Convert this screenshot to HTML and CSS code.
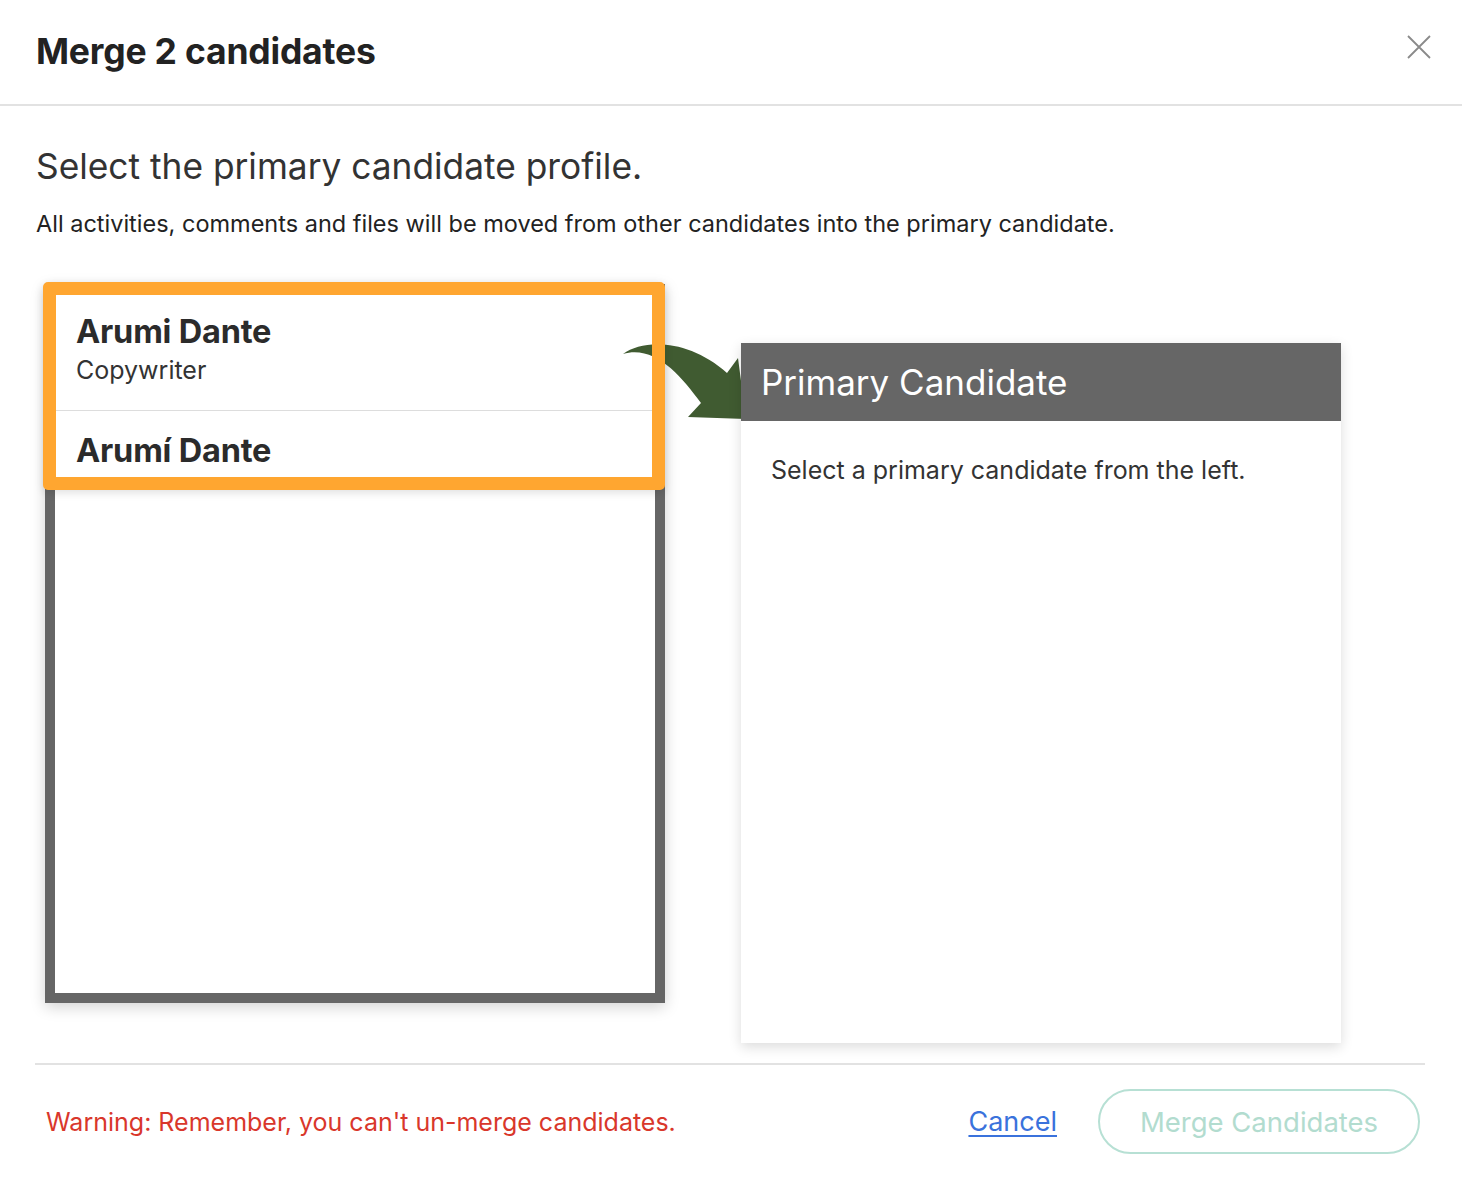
FILE: index.html
```html
<!DOCTYPE html>
<html lang="en">
<head>
<meta charset="utf-8">
<title>Merge 2 candidates</title>
<link rel="stylesheet" href="styles.css">
</head>
<body>
<div class="modal">
  <header class="modal-header">
    <h1 class="modal-title">Merge 2 candidates</h1>
    <button class="close-btn" aria-label="Close">
      <svg width="24" height="24" viewBox="0 0 24 24"><path d="M1 1 L23 23 M23 1 L1 23" stroke="#8a8a8a" stroke-width="1.8" fill="none"/></svg>
    </button>
  </header>
  <main class="modal-body">
    <h2 class="subtitle">Select the primary candidate profile.</h2>
    <p class="description">All activities, comments and files will be moved from other candidates into the primary candidate.</p>
    <div class="panels">
      <svg class="arrow" width="135" height="90" viewBox="0 0 135 90">
        <path d="M 8 19 C 30 3, 75 5, 112 38 L 123 23 L 131 84 L 73 82 L 86 68 C 65 40, 40 10, 8 19 Z" fill="#405b31"/>
      </svg>
      <div class="candidate-list">
        <div class="candidate">
          <div class="candidate-name">Arumi Dante</div>
          <div class="candidate-role">Copywriter</div>
        </div>
        <div class="candidate candidate-last">
          <div class="candidate-name">Arumí Dante</div>
        </div>
        <div class="highlight"></div>
      </div>
      <div class="primary-panel">
        <div class="primary-header">Primary Candidate</div>
        <div class="primary-body">Select a primary candidate from the left.</div>
      </div>
    </div>
  </main>
  <footer class="modal-footer">
    <span class="warning">Warning: Remember, you can't un-merge candidates.</span>
    <div class="actions">
      <a href="#" class="cancel">Cancel</a>
      <button class="merge-btn" disabled>Merge Candidates</button>
    </div>
  </footer>
</div>
</body>
</html>
```
FILE: styles.css
```css
* { box-sizing: border-box; }
html, body { margin: 0; padding: 0; background: #fff; }
body {
  font-family: Inter, Roboto, "Liberation Sans", Arial, sans-serif;
  color: #222;
  width: 1462px;
  height: 1192px;
  overflow: hidden;
}
.modal-header {
  height: 106px;
  border-bottom: 2px solid #e2e2e2;
  display: flex;
  align-items: flex-start;
  justify-content: space-between;
  padding: 0 31px 0 36px;
}
.modal-title {
  margin: 31px 0 0;
  font-size: 35.5px;
  line-height: 42px;
  font-weight: 700;
  color: #222;
  letter-spacing: -0.2px;
}
.close-btn {
  margin-top: 35px;
  padding: 0;
  border: 0;
  background: none;
  width: 24px;
  height: 24px;
  cursor: pointer;
}
.close-btn svg { display: block; }
.modal-body {
  padding: 0 36px;
}
.subtitle {
  margin: 0;
  padding-top: 41px;
  font-size: 35.3px;
  line-height: 40px;
  font-weight: 400;
  color: #333;
}
.description {
  margin: 23px 0 0;
  font-size: 23.5px;
  line-height: 28px;
  color: #222;
}
.panels {
  position: relative;
  display: flex;
  align-items: flex-start;
  margin: 46px 0 0 9px;
}
.arrow {
  position: absolute;
  left: 570px;
  top: 51px;
  z-index: 2;
}
.candidate-list {
  position: relative;
  width: 620px;
  height: 719px;
  border: 10px solid #666;
  background: #fff;
  box-shadow: 0 4px 14px rgba(0,0,0,0.18);
}
.candidate {
  padding: 19px 20px 25px 21px;
  border-bottom: 1px solid #ddd;
}
.candidate-last {
  border-bottom: 0;
  padding-top: 21px;
}
.candidate-name {
  font-size: 32.5px;
  line-height: 38px;
  font-weight: 700;
  color: #2b2b2b;
  letter-spacing: -0.2px;
}
.candidate-role {
  margin-top: 4px;
  font-size: 25px;
  line-height: 30px;
  color: #333;
}
.highlight {
  position: absolute;
  z-index: 3;
  left: -12px;
  top: -12px;
  width: 622px;
  height: 208px;
  border: 13px solid #ffa630;
  border-radius: 5px;
  box-shadow: 0 3px 8px rgba(0,0,0,0.12);
  pointer-events: none;
}
.primary-panel {
  position: relative;
  z-index: 4;
  margin: 59px 0 0 76px;
  width: 600px;
  height: 700px;
  background: #fff;
  box-shadow: 0 4px 12px rgba(0,0,0,0.14);
}
.primary-header {
  height: 78px;
  background: #666;
  color: #fff;
  font-size: 35px;
  line-height: 78px;
  padding-left: 20px;
}
.primary-body {
  padding: 34px 30px 0;
  font-size: 25px;
  line-height: 30px;
  color: #333;
}
.modal-footer {
  margin: 20px 37px 0 35px;
  border-top: 2px solid #e2e2e2;
  display: flex;
  align-items: center;
  justify-content: space-between;
  padding: 24px 5px 0 11px;
}
.warning {
  font-size: 25px;
  color: #d9372b;
}
.actions {
  display: flex;
  align-items: center;
  gap: 41px;
}
.cancel {
  font-size: 27px;
  color: #3a72dc;
  text-decoration: underline;
  text-underline-offset: 4px;
}
.merge-btn {
  width: 322px;
  height: 65px;
  border: 2px solid #b7e0d4;
  border-radius: 33px;
  background: #fff;
  color: #b2dccf;
  font-family: inherit;
  font-size: 27.5px;
  padding: 0;
}
```
